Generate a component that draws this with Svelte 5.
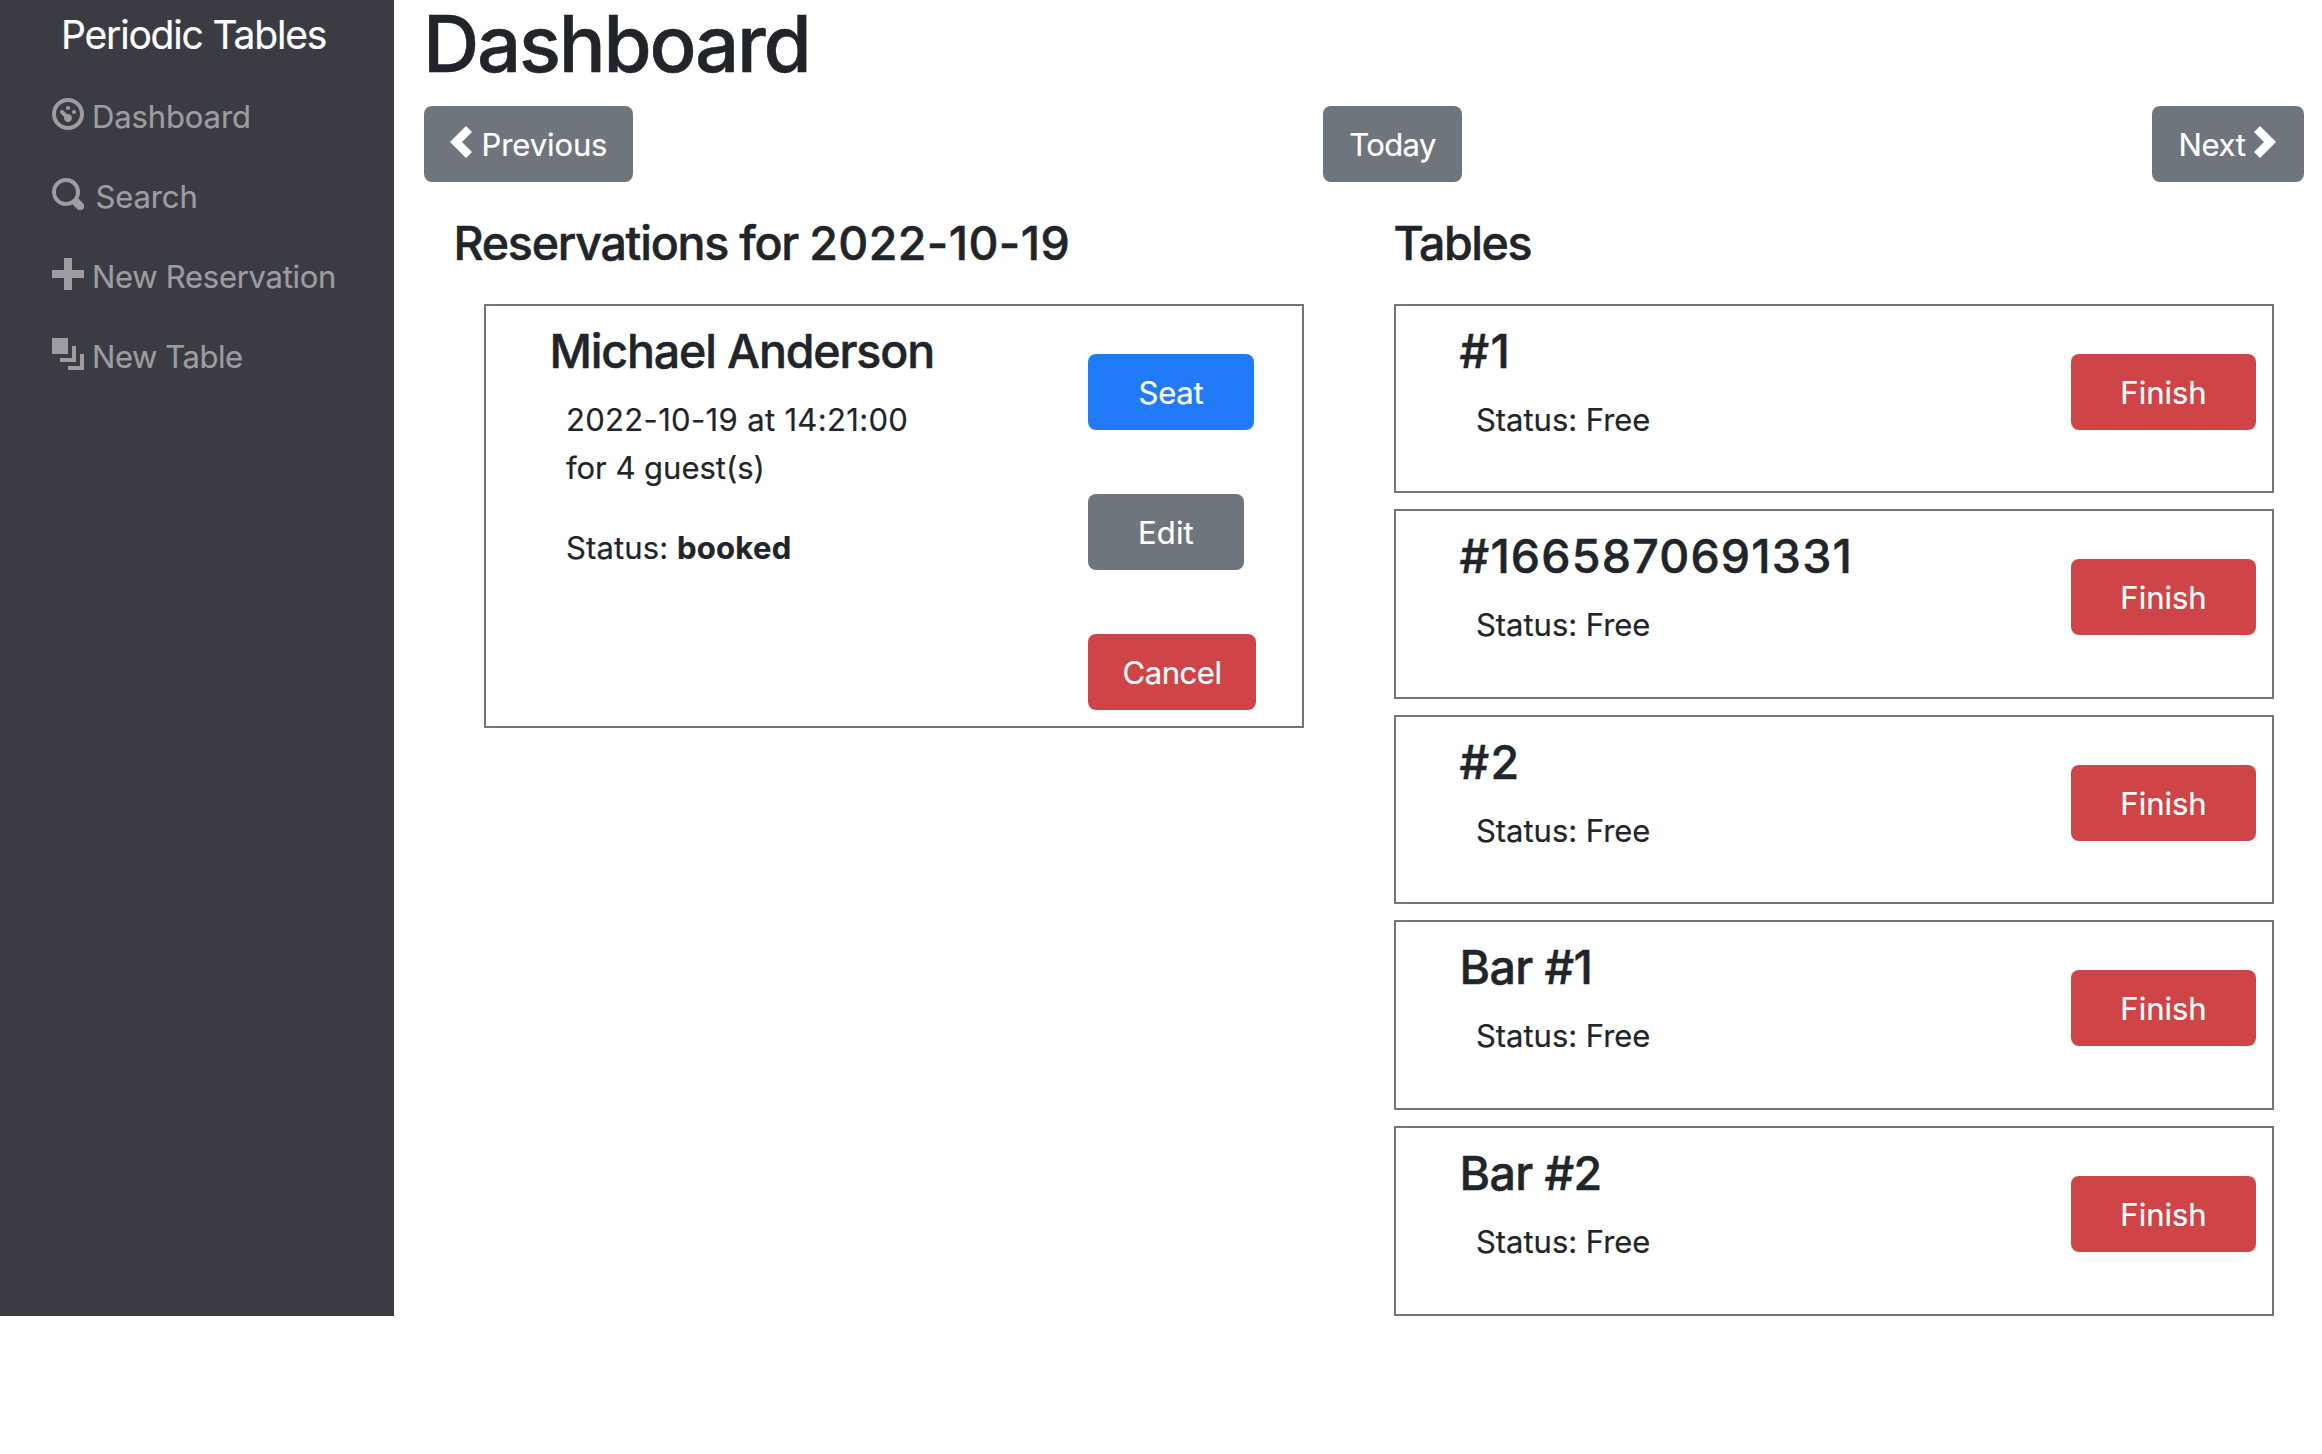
<script>
  const nav = [
    {
      label: 'Dashboard',
      kind: 'dashboard',
      icon: 'M4 0c-2.2 0-4 1.8-4 4s1.8 4 4 4 4-1.8 4-4-1.8-4-4-4zm0 1c1.66 0 3 1.34 3 3s-1.34 3-3 3-3-1.34-3-3 1.34-3 3-3zm0 1c-.28 0-.5.22-.5.5s.22.5.5.5.5-.22.5-.5-.22-.5-.5-.5zm-1.66 1a.5.5 0 0 0-.19.84l.91.91c-.02.08-.06.16-.06.25 0 .55.45 1 1 1s1-.45 1-1-.45-1-1-1c-.09 0-.17.04-.25.06l-.91-.91a.5.5 0 0 0-.44-.16.5.5 0 0 0-.06 0zm3.16 0c-.28 0-.5.22-.5.5s.22.5.5.5.5-.22.5-.5-.22-.5-.5-.5z'
    },
    {
      label: 'Search',
      kind: 'search',
      icon: 'M3.5 0c-1.93 0-3.5 1.57-3.5 3.5s1.57 3.5 3.5 3.5c.59 0 1.17-.14 1.66-.41a1 1 0 0 0 .13.13l1 1a1.02 1.02 0 1 0 1.44-1.44l-1-1a1 1 0 0 0-.16-.13c.27-.49.44-1.06.44-1.66 0-1.93-1.55-3.5-3.5-3.5zm0 1c1.39 0 2.5 1.11 2.5 2.5 0 .66-.24 1.27-.66 1.72-.01.01-.02.02-.03.03a1 1 0 0 0-.13.13c-.44.4-1.04.63-1.69.63-1.39 0-2.5-1.11-2.5-2.5s1.11-2.5 2.5-2.5z'
    },
    { label: 'New Reservation', kind: 'reservation', icon: 'M3 0v3h-3v2h3v3h2v-3h3v-2h-3v-3h-2z' },
    { label: 'New Table', kind: 'table', icon: 'M0 0v4h4v-4h-4zm5 2v3h-3v1h4v-4h-1zm2 2v3h-3v1h4v-4h-1z' }
  ];

  const tables = [
    { name: '#1', numeric: true },
    { name: '#1665870691331', numeric: true },
    { name: '#2', numeric: true },
    { name: 'Bar #1', numeric: false },
    { name: 'Bar #2', numeric: false }
  ];
</script>

<div class="app">
  <nav class="sidebar">
    <a class="brand" href="#home">Periodic Tables</a>
    <ul>
      {#each nav as item}
        <li>
          <a class="nav-link {item.kind}" href="#{item.kind}">
            <svg viewBox="0 0 8 8" aria-hidden="true"><path d={item.icon} /></svg>
            <span>{item.label}</span>
          </a>
        </li>
      {/each}
    </ul>
  </nav>

  <main>
    <h1>Dashboard</h1>

    <div class="toolbar">
      <button class="btn grey previous">
        <svg viewBox="0 0 8 8" aria-hidden="true"><path d="M4 0l-4 4 4 4 1.5-1.5-2.5-2.5 2.5-2.5-1.5-1.5z" /></svg>
        <span>Previous</span>
      </button>
      <button class="btn grey today">Today</button>
      <button class="btn grey next">
        <span>Next</span>
        <svg viewBox="0 0 8 8" aria-hidden="true"><path d="M3.5 0l-1.5 1.5 2.5 2.5-2.5 2.5 1.5 1.5 4-4-4-4z" /></svg>
      </button>
    </div>

    <div class="panels">
      <section>
        <h2 class="reservations-title">Reservations for <span class="title-date">2022-10-19</span></h2>
        <article class="card reservation-card">
          <div class="info">
            <h3>Michael Anderson</h3>
            <p><span class="date">2022-10-19 at 14:21:00</span><br />for 4 guest(s)</p>
            <p class="status"><span class="status-label">Status:</span> <strong>booked</strong></p>
          </div>
          <div class="actions">
            <button class="btn blue seat">Seat</button>
            <button class="btn grey edit">Edit</button>
            <button class="btn red cancel">Cancel</button>
          </div>
        </article>
      </section>

      <section>
        <h2 class="tables-title">Tables</h2>
        <div class="table-list">
          {#each tables as table}
            <article class="card table-card">
              <div class="info">
                <h3 class:numeric={table.numeric} class:named={!table.numeric}>{table.name}</h3>
                <p>Status: Free</p>
              </div>
              <button class="btn red finish">Finish</button>
            </article>
          {/each}
        </div>
      </section>
    </div>
  </main>
</div>

<style>
  :global(body) {
    background: #fff;
  }

  .app {
    display: flex;
    align-items: stretch;
    width: 2322px;
    height: 1316px;
    font-family: Inter, 'Liberation Sans', sans-serif;
    font-size: 31px;
    line-height: 48px;
    color: #212529;
    -webkit-text-stroke: 0.2px currentColor;
  }

  h1, h2, h3, p, ul {
    margin: 0;
    padding: 0;
  }

  h1, h2, h3 {
    font-weight: 500;
    -webkit-text-stroke: 0.5px currentColor;
  }

  svg {
    width: 32px;
    height: 32px;
    flex: none;
    fill: currentColor;
  }

  .sidebar {
    box-sizing: border-box;
    width: 394px;
    flex: none;
    background: #3b3b44;
  }

  .brand {
    display: block;
    margin-bottom: 7px;
    padding-left: 61px;
    font-size: 39px;
    line-height: 70px;
    letter-spacing: -1.19px;
    color: #fff;
    text-decoration: none;
    white-space: nowrap;
  }

  ul {
    list-style: none;
  }

  .nav-link {
    display: flex;
    align-items: center;
    gap: 8px;
    height: 80px;
    padding-left: 52px;
    letter-spacing: -0.12px;
    color: #9d9da1;
    text-decoration: none;
    white-space: nowrap;
  }

  .nav-link svg {
    margin-bottom: 6px;
  }

  .nav-link.search {
    gap: 11.5px;
  }

  .nav-link.reservation {
    letter-spacing: -0.28px;
  }

  .nav-link.table {
    letter-spacing: -0.45px;
  }

  main {
    flex: 1;
    min-width: 0;
    padding: 0 18px 0 30px;
  }

  h1 {
    margin: 0 0 18px -1px;
    font-size: 78px;
    line-height: 88px;
    letter-spacing: -2.27px;
  }

  .toolbar {
    display: flex;
    justify-content: space-between;
  }

  .btn {
    display: flex;
    align-items: center;
    justify-content: center;
    box-sizing: border-box;
    height: 76px;
    margin: 0;
    padding: 2px 0 0;
    border: 0;
    border-radius: 8px;
    font: inherit;
    color: #fff;
    white-space: nowrap;
  }

  .btn svg {
    margin-bottom: 6px;
  }

  .grey {
    background: #6e757c;
  }

  .blue {
    background: #217bf9;
  }

  .red {
    background: #ce4447;
  }

  .previous {
    width: 209px;
    letter-spacing: -0.11px;
  }

  .today {
    width: 139px;
    letter-spacing: -0.63px;
  }

  .next {
    width: 152px;
    letter-spacing: -0.32px;
  }

  .seat {
    width: 166px;
    letter-spacing: -0.22px;
  }

  .edit {
    width: 156px;
    letter-spacing: 0.13px;
  }

  .cancel {
    width: 168px;
    letter-spacing: -0.43px;
  }

  .finish {
    width: 185px;
    margin: 48px 16px 0 0;
  }

  .panels {
    display: grid;
    grid-template-columns: 850px 880px;
    gap: 90px;
    padding: 32px 30px 0;
  }

  h2 {
    margin: 0 0 31.9px -0.5px;
    font-size: 46.5px;
    line-height: 58px;
    white-space: nowrap;
  }

  .reservations-title {
    letter-spacing: -1.23px;
  }

  .title-date {
    letter-spacing: 0.4px;
  }

  .tables-title {
    letter-spacing: -1.43px;
  }

  .card {
    display: flex;
    justify-content: space-between;
    align-items: flex-start;
    box-sizing: border-box;
    border: 2px solid #6e757f;
  }

  .reservation-card {
    height: 424px;
    margin-left: 30px;
  }

  .table-list {
    display: flex;
    flex-direction: column;
    gap: 16px;
  }

  .table-card {
    height: 189.5px;
  }

  .table-card:last-child {
    height: 190px;
  }

  .info {
    padding: 16px 0 0 63.5px;
  }

  h3 {
    margin-bottom: 16px;
    font-size: 46.5px;
    line-height: 58px;
    letter-spacing: -1.15px;
  }

  h3.numeric {
    letter-spacing: 1.18px;
  }

  h3.named {
    letter-spacing: -0.6px;
  }

  p {
    padding-left: 16.5px;
    letter-spacing: -0.03px;
  }

  .date {
    letter-spacing: 0.33px;
  }

  .status {
    margin-top: 32px;
  }

  .status-label {
    letter-spacing: 0.12px;
  }

  strong {
    font-weight: 700;
    letter-spacing: 0.3px;
  }

  .actions {
    display: flex;
    flex-direction: column;
    gap: 64px;
    width: 214px;
    padding-top: 48px;
  }
</style>
